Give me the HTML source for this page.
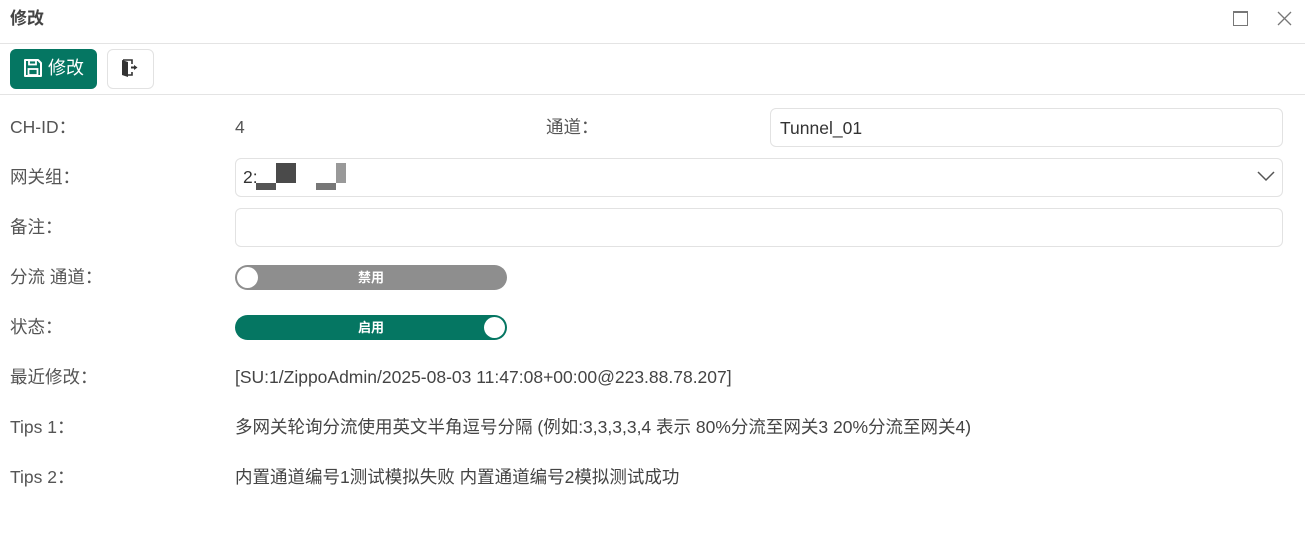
<!DOCTYPE html>
<html><head><meta charset="utf-8"><style>
*{box-sizing:border-box;margin:0;padding:0}
body{width:1305px;height:534px;background:#fff;font-family:"Liberation Sans","Noto Sans CJK SC",sans-serif;color:#555;position:relative;overflow:hidden;font-size:17.5px;line-height:20px}
.a{position:absolute;white-space:nowrap}
.hr{position:absolute;left:0;width:1305px;height:1px;background:#e4e4e4}
.lbl{position:absolute;left:10px;color:#555;white-space:nowrap}
.inp{position:absolute;border:1px solid #e2e2e2;border-radius:6px;background:#fff}
.tg{position:absolute;left:235px;width:272px;height:25px;border-radius:13px;color:#fff;font-size:13px;font-weight:bold;text-align:center;line-height:25px}
.kn{position:absolute;top:2px;width:21px;height:21px;border-radius:50%;background:#fff}
</style></head><body>
<div class="a" style="left:10px;top:9px;font-size:17px;font-weight:bold;color:#444">修改</div>
<div class="a" style="left:1233px;top:11px;width:15px;height:15px;border:1.5px solid #777;border-top-width:2px"></div>
<svg class="a" style="left:1277px;top:11px" width="15" height="15"><path d="M1 1L14 14M14 1L1 14" stroke="#777" stroke-width="1.3"/></svg>
<div class="hr" style="top:43px"></div>
<div class="a" style="left:10px;top:49px;width:87px;height:40px;background:#057662;border-radius:6px;color:#fff;font-size:18px;line-height:38px;padding-left:38px">修改</div>
<svg class="a" style="left:23px;top:58px" width="20" height="20" viewBox="0 0 20 20"><path d="M2 2h13l3 3v13H2z" fill="none" stroke="#fff" stroke-width="2" stroke-linejoin="round"/><rect x="6" y="2.5" width="7" height="4" fill="none" stroke="#fff" stroke-width="1.8"/><rect x="5.5" y="11" width="9" height="6" fill="none" stroke="#fff" stroke-width="1.8"/></svg>
<div class="a" style="left:107px;top:49px;width:47px;height:40px;border:1px solid #e2e2e2;border-radius:6px"></div>
<svg class="a" style="left:120px;top:58px" width="20" height="20" viewBox="0 0 20 20"><path d="M2 2L8 4V19L2 17Z" fill="#333"/><path d="M3 2H12V6M12 14V17H8" stroke="#333" stroke-width="1.6" fill="none"/><path d="M11 9.5h4" stroke="#333" stroke-width="2"/><path d="M14 7l3.5 2.5L14 12z" fill="#333"/></svg>
<div class="hr" style="top:94px"></div>
<div class="lbl" style="top:117px">CH-ID：</div>
<div class="a" style="left:235px;top:117px">4</div>
<div class="a" style="left:546px;top:117px">通道：</div>
<div class="inp" style="left:770px;top:108px;width:513px;height:39px;padding:9px;color:#333">Tunnel_01</div>
<div class="lbl" style="top:167px">网关组：</div>
<div class="inp" style="left:235px;top:158px;width:1048px;height:39px"></div>
<div class="a" style="left:243px;top:167px;color:#333">2:</div>
<div class="a" style="left:256px;top:183px;width:20px;height:7px;background:#555"></div>
<div class="a" style="left:276px;top:163px;width:20px;height:20px;background:#4a4a4a"></div>
<div class="a" style="left:316px;top:183px;width:20px;height:7px;background:#777"></div>
<div class="a" style="left:336px;top:163px;width:10px;height:20px;background:#999"></div>
<svg class="a" style="left:1257px;top:170px" width="18" height="12"><path d="M1 2l8 8 8-8" stroke="#555" stroke-width="1.5" fill="none"/></svg>
<div class="lbl" style="top:217px">备注：</div>
<div class="inp" style="left:235px;top:208px;width:1048px;height:39px"></div>
<div class="lbl" style="top:267px">分流 通道：</div>
<div class="tg" style="top:265px;background:#8e8e8e">禁用<div class="kn" style="left:2px"></div></div>
<div class="lbl" style="top:317px">状态：</div>
<div class="tg" style="top:315px;background:#057662">启用<div class="kn" style="right:2px"></div></div>
<div class="lbl" style="top:367px">最近修改：</div>
<div class="a" style="left:235px;top:367px;color:#444">[SU:1/ZippoAdmin/2025-08-03 11:47:08+00:00@223.88.78.207]</div>
<div class="lbl" style="top:417px">Tips 1：</div>
<div class="a" style="left:235px;top:417px;color:#444">多网关轮询分流使用英文半角逗号分隔 (例如:3,3,3,3,4 表示 80%分流至网关3 20%分流至网关4)</div>
<div class="lbl" style="top:467px">Tips 2：</div>
<div class="a" style="left:235px;top:467px;color:#444">内置通道编号1测试模拟失败 内置通道编号2模拟测试成功</div>
</body></html>
